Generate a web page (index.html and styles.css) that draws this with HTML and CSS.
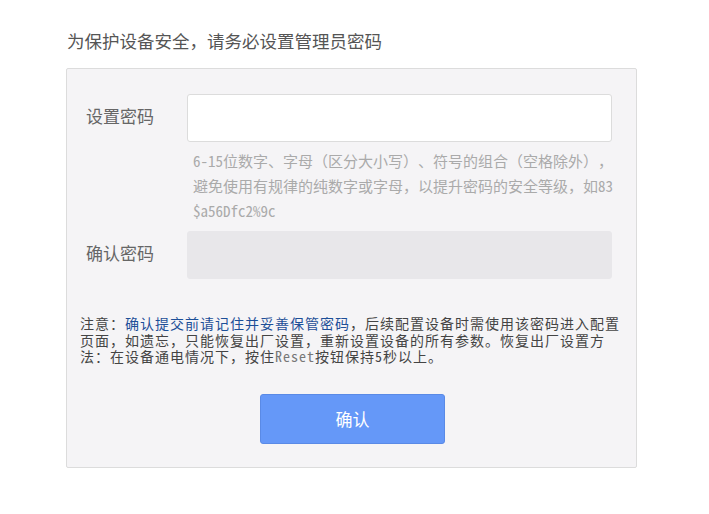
FILE: index.html
```html
<!DOCTYPE html>
<html lang="zh-CN">
<head>
    <meta charset="UTF-8">
    <meta name="viewport" content="width=device-width, initial-scale=1.0">
    <title>设置管理员密码</title>
    <link rel="stylesheet" href="styles.css">
</head>
<body>

    <div class="page">
        <h1 class="title">为保护设备安全，请务必设置管理员密码</h1>

        <form class="panel" onsubmit="return false">
            <div class="row">
                <label class="label" for="pwd">设置密码</label>
                <input class="field" id="pwd" type="password">
            </div>
            <p class="hint">6-15位数字、字母（区分大小写）、符号的组合（空格除外），<br>避免使用有规律的纯数字或字母，以提升密码的安全等级，如83<br>$a56Dfc2%9c</p>

            <div class="row">
                <label class="label" for="pwd2">确认密码</label>
                <input class="field field-off" id="pwd2" type="password" disabled>
            </div>

            <p class="note">注意：<span class="strong">确认提交前请记住并妥善保管密码</span>，后续配置设备时需使用该密码进入配置<br>页面，如遗忘，只能恢复出厂设置，重新设置设备的所有参数。恢复出厂设置方<br>法：在设备通电情况下，按住<span class="mono">Reset</span>按钮保持5秒以上。</p>

            <button class="ok-btn" type="submit">确认</button>
        </form>
    </div>

</body>
</html>
```

FILE: styles.css
```css
body { margin: 0; background: #fff; font-family: "Noto Sans Mono CJK SC", "Noto Sans CJK SC", sans-serif; text-spacing-trim: space-all; }
.page { padding: 29px 0 0 66px; width: 571px; }
.title { margin: 0 0 15px 1px; font-size: 17.5px; font-weight: normal; color: #555; line-height: 24px; }
.panel { box-sizing: border-box; height: 400px; background: #f5f4f6; border: 1px solid #dcdcdc; border-radius: 2px; padding: 25px 24px 0 0; }
.row { display: flex; align-items: center; }
.label { width: 101px; padding-left: 19px; margin-bottom: 6px; font-size: 17px; color: #666; }
.field { box-sizing: border-box; width: 425px; height: 48px; margin: 0; border: 1px solid #dcdcdc; border-radius: 3px; background: #fff; }
.field-off { background: #e8e7ea; border-color: #e8e7ea; }
.hint { margin: 6px 0 8px 126px; font-size: 15px; line-height: 25px; color: #aaa; white-space: nowrap; }
.note { margin: 36px 0 0 13px; font-size: 14px; letter-spacing: 1px; line-height: 16.5px; color: #444; white-space: nowrap; }
.strong { color: #1d4f98; }
.mono { color: #777; }
.ok-btn { display: block; width: 185px; height: 50px; margin: 29px 0 0 193px; background: #6598f8; border: 1px solid #5a8ae6; border-radius: 3px; color: #fff; font-family: inherit; font-size: 17px; }
```
